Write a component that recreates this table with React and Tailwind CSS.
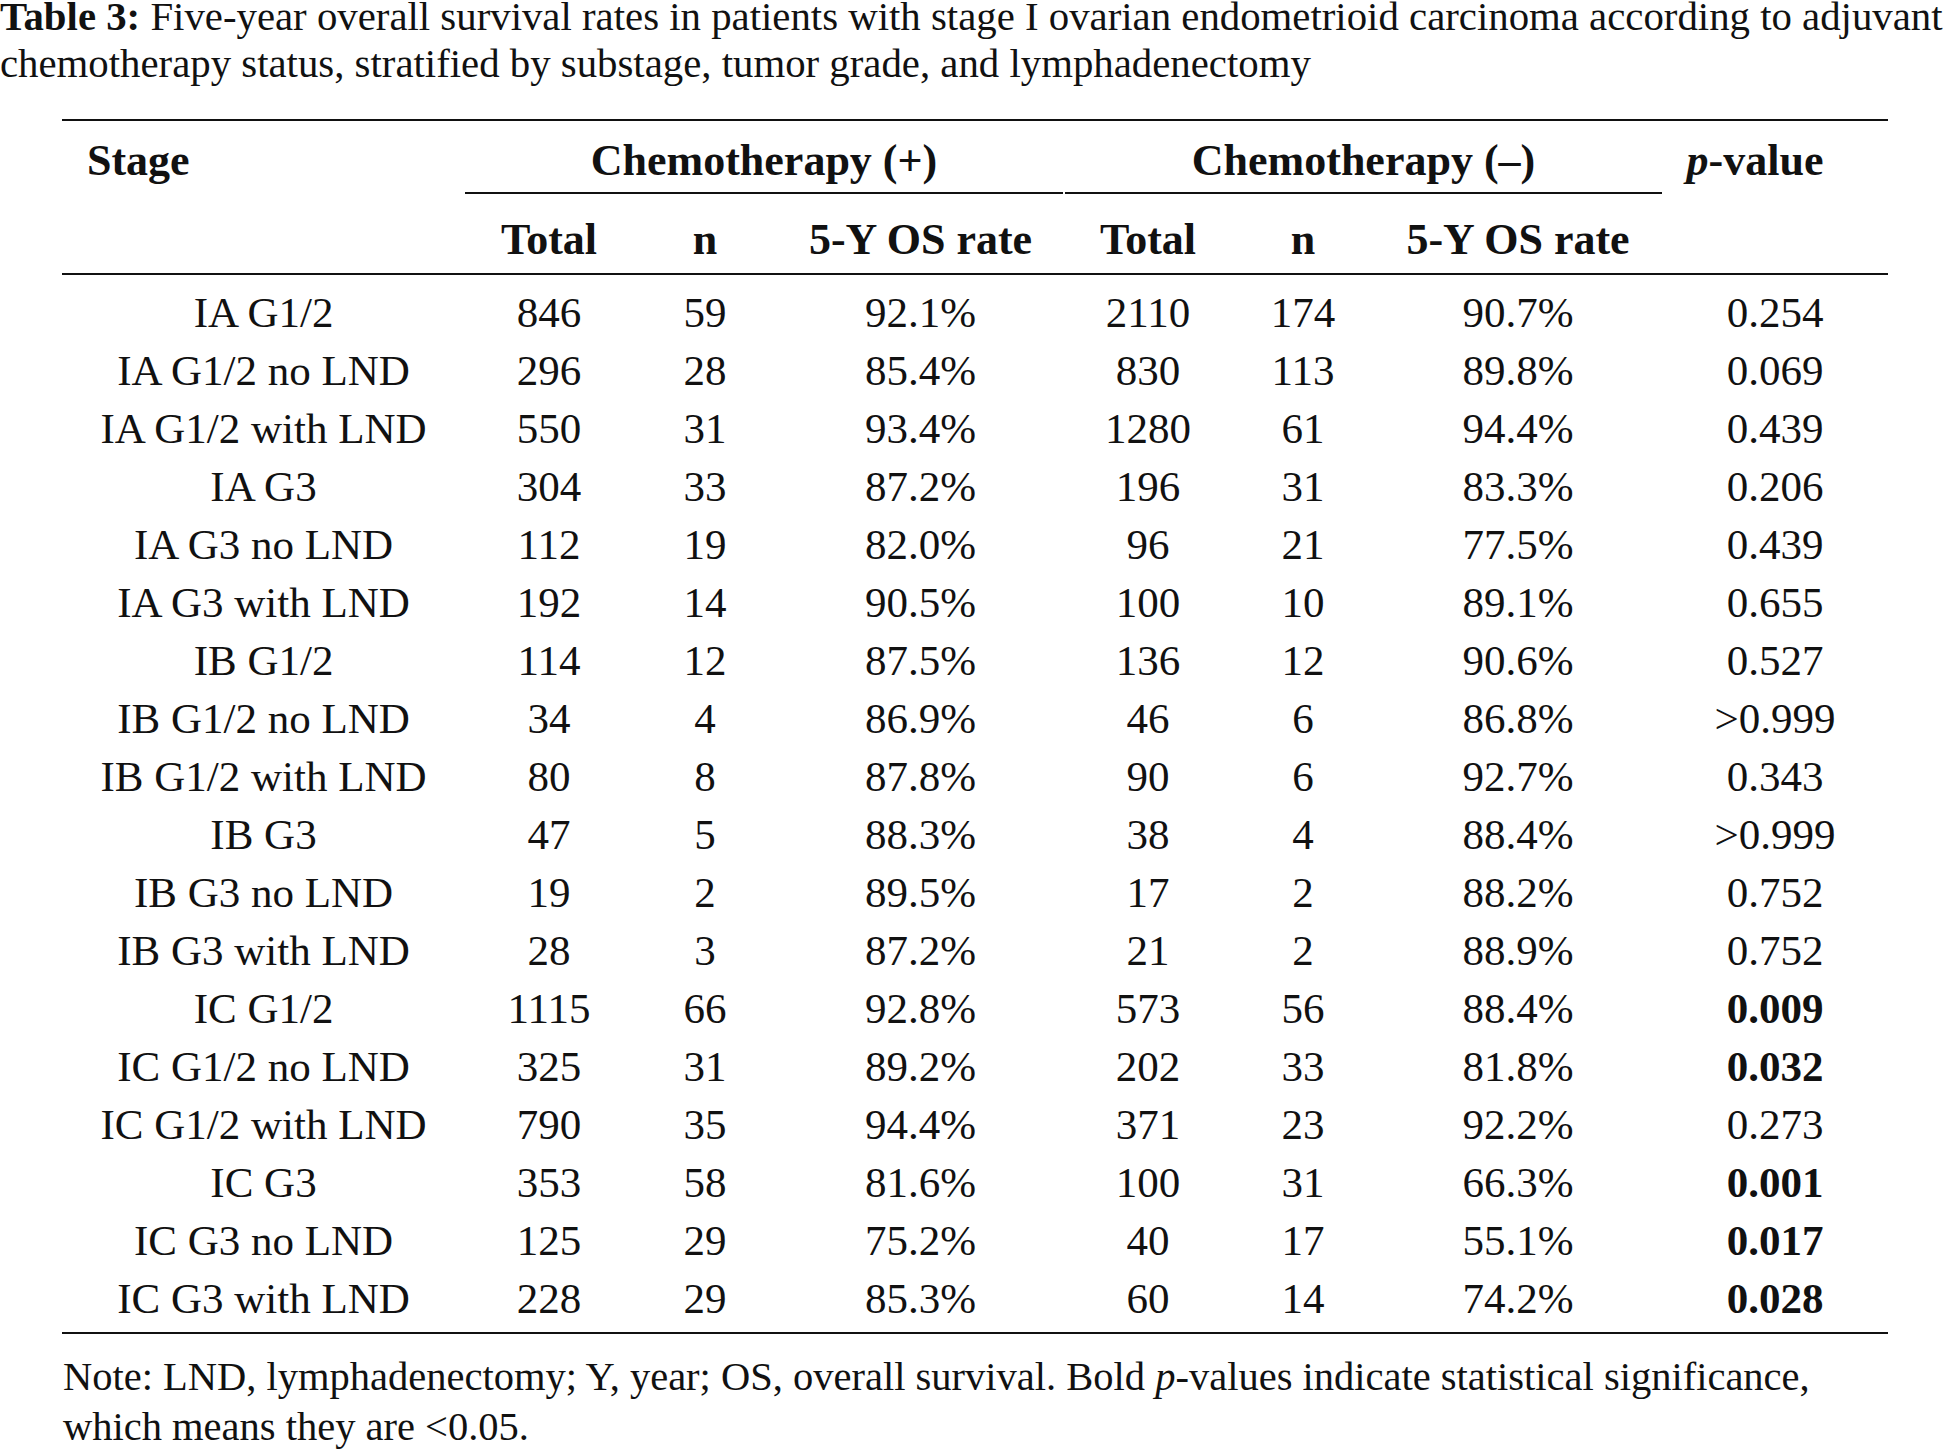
const rows = [
  ["IA G1/2", "846", "59", "92.1%", "2110", "174", "90.7%", "0.254", false],
  ["IA G1/2 no LND", "296", "28", "85.4%", "830", "113", "89.8%", "0.069", false],
  ["IA G1/2 with LND", "550", "31", "93.4%", "1280", "61", "94.4%", "0.439", false],
  ["IA G3", "304", "33", "87.2%", "196", "31", "83.3%", "0.206", false],
  ["IA G3 no LND", "112", "19", "82.0%", "96", "21", "77.5%", "0.439", false],
  ["IA G3 with LND", "192", "14", "90.5%", "100", "10", "89.1%", "0.655", false],
  ["IB G1/2", "114", "12", "87.5%", "136", "12", "90.6%", "0.527", false],
  ["IB G1/2 no LND", "34", "4", "86.9%", "46", "6", "86.8%", ">0.999", false],
  ["IB G1/2 with LND", "80", "8", "87.8%", "90", "6", "92.7%", "0.343", false],
  ["IB G3", "47", "5", "88.3%", "38", "4", "88.4%", ">0.999", false],
  ["IB G3 no LND", "19", "2", "89.5%", "17", "2", "88.2%", "0.752", false],
  ["IB G3 with LND", "28", "3", "87.2%", "21", "2", "88.9%", "0.752", false],
  ["IC G1/2", "1115", "66", "92.8%", "573", "56", "88.4%", "0.009", true],
  ["IC G1/2 no LND", "325", "31", "89.2%", "202", "33", "81.8%", "0.032", true],
  ["IC G1/2 with LND", "790", "35", "94.4%", "371", "23", "92.2%", "0.273", false],
  ["IC G3", "353", "58", "81.6%", "100", "31", "66.3%", "0.001", true],
  ["IC G3 no LND", "125", "29", "75.2%", "40", "17", "55.1%", "0.017", true],
  ["IC G3 with LND", "228", "29", "85.3%", "60", "14", "74.2%", "0.028", true],
];

const cols = "grid grid-cols-[403px_168px_144px_287px_168px_142px_288px_226px]";

export default function App() {
  return (
    <div className="w-[1952px] min-h-[1452px] bg-white text-[#111] overflow-hidden font-['Liberation_Serif',serif]">
      {/* caption */}
      <div className="pt-[2px] text-[40.8px] whitespace-nowrap">
        <div className="leading-[29px]">
          <span className="font-bold">Table 3:</span> Five-year overall survival rates in patients with stage I
          ovarian endometrioid carcinoma according to adjuvant
        </div>
        <div className="mt-[8px] leading-[49px]">
          chemotherapy status, stratified by substage, tumor grade, and lymphadenectomy
        </div>
      </div>

      <div className="mt-[31px] ml-[62px] w-[1826px]">
        {/* header */}
        <div className={`${cols} border-t-2 border-b-2 border-[#111] text-[44px] font-bold`}>
          <div className="row-span-2 pt-[11px] pl-[25px] leading-[58px]">Stage</div>
          <div className="col-span-3 pt-[11px]">
            <div className="mr-[1px] border-b-2 border-[#111] pb-[2px] text-center leading-[58px]">
              Chemotherapy (+)
            </div>
          </div>
          <div className="col-span-3 pt-[11px]">
            <div className="ml-[1px] border-b-2 border-[#111] pb-[2px] text-center leading-[58px]">
              Chemotherapy (–)
            </div>
          </div>
          <div className="row-span-2 pt-[11px] pr-[40px] text-center leading-[58px]">
            <span className="italic">p</span>-value
          </div>
          {["Total", "n", "5-Y OS rate", "Total", "n", "5-Y OS rate"].map((h, i) => (
            <div key={i} className="pt-[17px] pb-[4px] text-center leading-[58px]">
              {h}
            </div>
          ))}
        </div>

        {/* body */}
        <div className="border-b-2 border-[#111] pt-[9px] pb-[4px] text-[43px]">
          {rows.map((r) => (
            <div key={r[0]} className={`${cols} h-[58px] leading-[58px] text-center`}>
              {r.slice(0, 7).map((c, i) => (
                <div key={i}>{c}</div>
              ))}
              <div className={r[8] ? "font-bold" : ""}>{r[7]}</div>
            </div>
          ))}
        </div>
      </div>

      {/* note */}
      <div className="mt-[18px] ml-[63px] text-[40.5px] leading-[50px] whitespace-nowrap">
        <div>
          Note: LND, lymphadenectomy; Y, year; OS, overall survival. Bold <span className="italic">p</span>-values
          indicate statistical significance,
        </div>
        <div>which means they are &lt;0.05.</div>
      </div>
    </div>
  );
}
